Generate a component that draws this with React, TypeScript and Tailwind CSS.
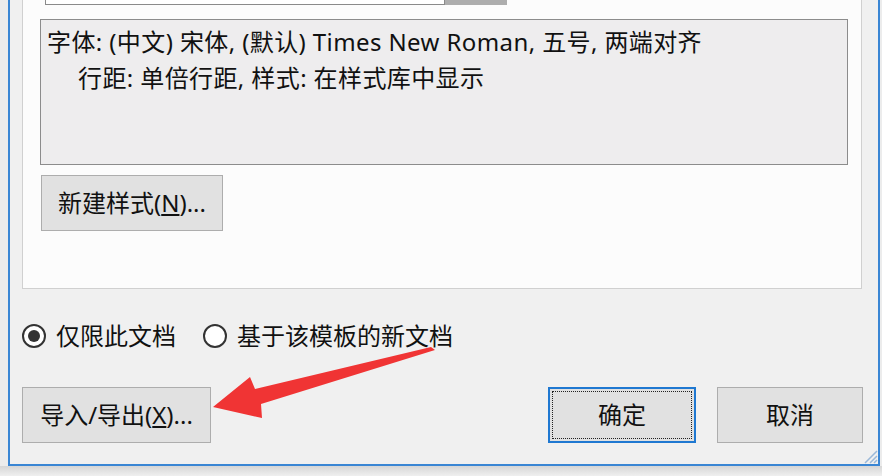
import React from "react"

const font = { fontFamily: '"Noto Sans", "Noto Sans CJK SC", sans-serif' }

function Radio({ checked, label }: { checked?: boolean; label: string }) {
  return (
    <label className="flex items-center gap-[10px]">
      <span className="flex h-[24px] w-[24px] items-center justify-center rounded-full border-2 border-[#333] bg-white">
        {checked && <span className="h-[12px] w-[12px] rounded-full bg-[#333]" />}
      </span>
      <span className="text-[24px] leading-[24px] text-[#111]">{label}</span>
    </label>
  )
}

function Btn({ children, className = "", focused = false }: { children: React.ReactNode; className?: string; focused?: boolean }) {
  if (focused) {
    return (
      <button className={`flex h-[56px] items-center justify-center border-2 border-[#1f78d1] bg-[#e1e1e1] p-[2px] ${className}`}>
        <span className="flex h-full w-full items-center justify-center border border-dotted border-[#222] text-[24px] text-[#111]">
          {children}
        </span>
      </button>
    )
  }
  return (
    <button className={`flex h-[56px] items-center justify-center border border-[#adadad] bg-[#e1e1e1] text-[24px] text-[#111] ${className}`}>
      {children}
    </button>
  )
}

export default function App() {
  return (
    <div className="relative h-[476px] w-[882px] overflow-hidden bg-[#ececec]" style={font}>
      {/* dialog frame */}
      <div className="ml-[8px] flex h-[466px] w-[872px] flex-col border-x-2 border-b-2 border-[#3a86d4] bg-[#f0f0f0]">
        {/* white tab panel */}
        <div className="ml-[12px] h-[289px] w-[840px] border-x border-b border-[#d0d0d0] bg-[#fcfcfc]">
          {/* list / input at top (cut off) */}
          <div className="ml-[22px] flex h-[5px]">
            <div className="w-[400px] border-x border-b border-[#8a8a8a] bg-white" />
            <div className="w-[62px] bg-[#adadad]" />
          </div>

          {/* description */}
          <div className="ml-[17px] mt-[14px] h-[146px] w-[808px] border border-[#8c8c8c] bg-[#eeedee] pl-[6px] pt-[4px] text-[24px] leading-[36px] tracking-[0.4px] text-[#111]">
            <div>字体: (中文) 宋体, (默认) Times New Roman, 五号, 两端对齐</div>
            <div className="pl-[31px]">行距: 单倍行距, 样式: 在样式库中显示</div>
          </div>

          <Btn className="ml-[18px] mt-[10px] w-[182px]">
            新建样式(<span className="underline underline-offset-2">N</span>)...
          </Btn>
        </div>

        {/* radio row */}
        <div className="ml-[12px] mt-[35px] flex items-center gap-[27px]">
          <Radio checked label="仅限此文档" />
          <Radio label="基于该模板的新文档" />
        </div>

        {/* buttons */}
        <div className="mt-[39px] flex items-center">
          <Btn className="ml-[12px] w-[189px]">
            导入/导出(<span className="underline underline-offset-2">X</span>)...
          </Btn>
          <Btn focused className="ml-[337px] w-[148px]">确定</Btn>
          <Btn className="ml-[21px] w-[146px]">取消</Btn>
        </div>

        {/* resize grip */}
        <div className="mt-auto flex justify-end">
          <svg width="16" height="16" viewBox="0 0 16 16">
            <path d="M15 3 L3 15 M15 8 L8 15 M15 12 L12 15" stroke="#9ab8d8" strokeWidth="1.5" fill="none" />
          </svg>
        </div>
      </div>
      <div className="h-[10px] bg-gradient-to-b from-[#d6d6d6] to-[#efefef]" />

      {/* red annotation arrow */}
      <svg className="pointer-events-none absolute left-0 top-0" width="882" height="476" viewBox="0 0 882 476">
        <polygon
          points="213,407 250,377 255,389 431,347 435,350 261,404 262,418"
          fill="#f03434"
        />
      </svg>
    </div>
  )
}
